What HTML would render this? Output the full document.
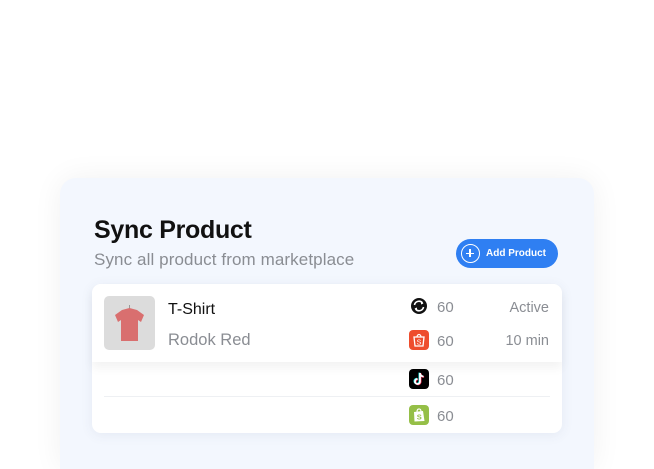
<!DOCTYPE html>
<html><head><meta charset="utf-8"><style>
*{margin:0;padding:0;box-sizing:border-box}
html,body{width:654px;height:469px;overflow:hidden}
body{background:#fff;font-family:"Liberation Sans",sans-serif;position:relative}
.panel{position:absolute;left:60px;top:178px;width:534px;height:291px;background:#f3f7fe;border-radius:16px 16px 0 0;box-shadow:0 0 30px rgba(0,0,0,0.06)}
.t{position:absolute;left:94px;top:216px;font-size:25px;font-weight:bold;color:#111;letter-spacing:-0.3px}
.s{position:absolute;left:94px;top:250px;font-size:17px;color:#8a8d93;letter-spacing:0.1px}
.btn{position:absolute;left:456px;top:239px;width:102px;height:29px;border-radius:15px;background:#2f7ff2;color:#fff;font-size:10px;font-weight:bold}
.btn .c{position:absolute;left:5px;top:5px;width:19px;height:19px;border:1.5px solid #fff;border-radius:50%}
.btn .c:before{content:"";position:absolute;left:4px;top:7.5px;width:8px;height:1.5px;background:#fff}
.btn .c:after{content:"";position:absolute;left:7.25px;top:4px;width:1.5px;height:8px;background:#fff}
.btn span{position:absolute;left:30px;top:9px}
.card{position:absolute;left:92px;top:284px;width:470px;height:149px;background:#fff;border-radius:9px;box-shadow:0 2px 12px rgba(60,80,120,0.08)}
.head{position:absolute;left:0;top:0;width:470px;height:78px;background:#fff;border-radius:9px 9px 0 0;box-shadow:0 6px 10px rgba(0,0,0,0.05)}
.img{position:absolute;left:12px;top:12px;width:51px;height:54px;background:#dcdcdc;border-radius:5px}
.name{position:absolute;left:76px;top:17px;font-size:16px;color:#111}
.var{position:absolute;left:76px;top:47px;font-size:16.5px;color:#8a8d93}
.n{position:absolute;font-size:15px;color:#8a8d93}
.r{position:absolute;right:13px;font-size:14.5px;color:#8a8d93}
.ic{position:absolute;left:317px;width:20px;height:20px;border-radius:4px}
.line{position:absolute;left:12px;right:12px;top:112px;height:1px;background:#eef0f3}
</style></head><body>
<div class="panel"></div>
<div class="t">Sync Product</div>
<div class="s">Sync all product from marketplace</div>
<div class="btn"><div class="c"></div><span>Add Product</span></div>
<div class="card">
 <div class="line"></div>
 <div class="head">
  <div class="img"><svg width="51" height="54" viewBox="0 0 51 54"><path d="M25.5 9 l0 4" stroke="#999" stroke-width="1" fill="none"/><path d="M18 14 L25.5 12 L33 14 L40 19 L37 26 L34 24 L34 45 L17 45 L17 24 L14 26 L11 19 Z" fill="#d96f6f"/></svg></div>
  <div class="name">T-Shirt</div>
  <div class="var">Rodok Red</div>
  <svg class="ic" style="top:12px" viewBox="0 0 20 20"><circle cx="10" cy="10" r="8" fill="#111"/><path d="M5.5 9 A4.5 4.5 0 0 1 13.5 7 M14.5 11 A4.5 4.5 0 0 1 6.5 13" stroke="#fff" stroke-width="1.6" fill="none"/><path d="M12 5.5 L14.5 7.5 L12 8.5Z M8 14.5 L5.5 12.5 L8 11.5Z" fill="#fff"/></svg>
  <div class="n" style="left:345px;top:15px">60</div>
  <div class="r" style="top:16px">Active</div>
  <svg class="ic" style="top:46px;background:#ee4d2d" viewBox="0 0 20 20"><path d="M5 7 H15 L14 16 H6 Z" fill="none" stroke="#fff" stroke-width="1.3"/><path d="M8 7 A2 2.5 0 0 1 12 7" fill="none" stroke="#fff" stroke-width="1.2"/><text x="10" y="14.5" font-size="7" fill="#fff" text-anchor="middle" font-family="Liberation Sans">S</text></svg>
  <div class="n" style="left:345px;top:49px">60</div>
  <div class="r" style="top:49px">10 min</div>
 </div>
 <svg class="ic" style="top:85px;background:#000" viewBox="0 0 20 20"><path d="M11 4 V12.5 A2.5 2.5 0 1 1 8.5 10 M11 4 A3.5 3.5 0 0 0 14.5 7.5" fill="none" stroke="#25f4ee" stroke-width="1.8" transform="translate(-0.6,-0.4)"/><path d="M11 4 V12.5 A2.5 2.5 0 1 1 8.5 10 M11 4 A3.5 3.5 0 0 0 14.5 7.5" fill="none" stroke="#fe2c55" stroke-width="1.8" transform="translate(0.6,0.4)"/><path d="M11 4 V12.5 A2.5 2.5 0 1 1 8.5 10 M11 4 A3.5 3.5 0 0 0 14.5 7.5" fill="none" stroke="#fff" stroke-width="1.8"/></svg>
 <div class="n" style="left:345px;top:88px">60</div>
 <svg class="ic" style="top:121px;background:#95bf47" viewBox="0 0 20 20"><path d="M5 7 L14 6 L15.5 16 L5.5 16.5 Z" fill="#fff"/><path d="M8 7 C8 3 12 3 12 6.5" fill="none" stroke="#fff" stroke-width="1.2"/><text x="10.3" y="14.5" font-size="7.5" font-weight="bold" fill="#95bf47" text-anchor="middle" font-family="Liberation Sans">S</text></svg>
 <div class="n" style="left:345px;top:124px">60</div>
</div>
</body></html>
